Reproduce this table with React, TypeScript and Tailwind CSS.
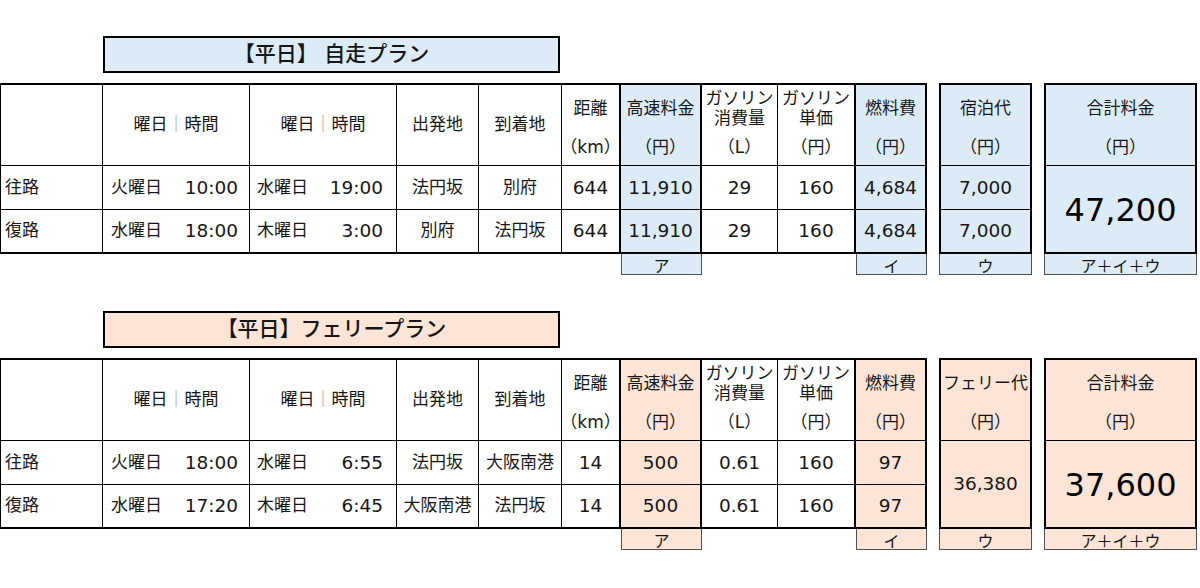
import React from "react";

type Row = {
  label: string;
  d1: string;
  t1: string;
  d2: string;
  t2: string;
  from: string;
  to: string;
  km: string;
  toll: string;
  gas: string;
  price: string;
  fuel: string;
};

type Plan = {
  title: string;
  fill: string;
  kTitle: string;
  kValues: string[] | null;
  kMerged: string | null;
  total: string;
  rows: Row[];
};

const plans: Plan[] = [
  {
    title: "【平日】 自走プラン",
    fill: "bg-[#ddebf7]",
    kTitle: "宿泊代",
    kValues: ["7,000", "7,000"],
    kMerged: null,
    total: "47,200",
    rows: [
      { label: "往路", d1: "火曜日", t1: "10:00", d2: "水曜日", t2: "19:00", from: "法円坂", to: "別府", km: "644", toll: "11,910", gas: "29", price: "160", fuel: "4,684" },
      { label: "復路", d1: "水曜日", t1: "18:00", d2: "木曜日", t2: "3:00", from: "別府", to: "法円坂", km: "644", toll: "11,910", gas: "29", price: "160", fuel: "4,684" },
    ],
  },
  {
    title: "【平日】フェリープラン",
    fill: "bg-[#fce4d6]",
    kTitle: "フェリー代",
    kValues: null,
    kMerged: "36,380",
    total: "37,600",
    rows: [
      { label: "往路", d1: "火曜日", t1: "18:00", d2: "水曜日", t2: "6:55", from: "法円坂", to: "大阪南港", km: "14", toll: "500", gas: "0.61", price: "160", fuel: "97" },
      { label: "復路", d1: "水曜日", t1: "17:20", d2: "木曜日", t2: "6:45", from: "大阪南港", to: "法円坂", km: "14", toll: "500", gas: "0.61", price: "160", fuel: "97" },
    ],
  },
];

const RB = ["border-r", "border-r", "border-r", "border-r", "border-r", "border-r-2", "border-r-2", "border-r", "border-r-2", "border-r-2"];
const BB = ["border-b", "border-b", "border-b-2"];

const Num = ({ children }: { children: React.ReactNode }) => (
  <span className="text-[18.5px]">{children}</span>
);

function TwoPart({ top, bottom }: { top: React.ReactNode; bottom: React.ReactNode }) {
  return (
    <div className="flex h-full flex-col">
      <div className="flex h-[46px] flex-col items-center justify-center leading-[20px]">{top}</div>
      <div className="flex flex-1 items-center justify-center">{bottom}</div>
    </div>
  );
}

const YoubiJikan = () => (
  <div className="flex h-full items-center justify-center">
    曜日<span className="text-[#9c9c9c]">｜</span>時間
  </div>
);

function Section({ plan }: { plan: Plan }) {
  const fillCol = (i: number) => (i === 6 || i === 9 ? plan.fill : "bg-white");
  const cell = (i: number, r: number) => `${RB[i]} ${BB[r]} border-black ${fillCol(i)}`;

  const header: React.ReactNode[] = [
    <div />,
    <YoubiJikan />,
    <YoubiJikan />,
    <div className="flex h-full items-center justify-center">出発地</div>,
    <div className="flex h-full items-center justify-center">到着地</div>,
    <TwoPart top={<span>距離</span>} bottom={<span>（km）</span>} />,
    <TwoPart top={<span>高速料金</span>} bottom={<span>（円）</span>} />,
    <TwoPart top={<><span>ガソリン</span><span>消費量</span></>} bottom={<span>（L）</span>} />,
    <TwoPart top={<><span>ガソリン</span><span>単価</span></>} bottom={<span>（円）</span>} />,
    <TwoPart top={<span>燃料費</span>} bottom={<span>（円）</span>} />,
  ];

  const rowCells = (row: Row): React.ReactNode[] => [
    <div className="flex h-full items-center pl-[4px]">{row.label}</div>,
    <div className="flex h-full items-center justify-between pl-[8px] pr-[11px]">
      <span>{row.d1}</span>
      <Num>{row.t1}</Num>
    </div>,
    <div className="flex h-full items-center justify-between pl-[7px] pr-[13px]">
      <span>{row.d2}</span>
      <Num>{row.t2}</Num>
    </div>,
    <div className="flex h-full items-center justify-center">{row.from}</div>,
    <div className="flex h-full items-center justify-center">{row.to}</div>,
    <div className="flex h-full items-center justify-center"><Num>{row.km}</Num></div>,
    <div className="flex h-full items-center justify-center"><Num>{row.toll}</Num></div>,
    <div className="flex h-full items-center justify-center"><Num>{row.gas}</Num></div>,
    <div className="flex h-full items-center justify-center"><Num>{row.price}</Num></div>,
    <div className="flex h-full items-center justify-center"><Num>{row.fuel}</Num></div>,
  ];

  const labelBox = `h-[21px] overflow-hidden border border-t-0 border-[#505050] ${plan.fill} flex items-center justify-center text-[16px] leading-none pt-[6px]`;

  return (
    <div className="flex flex-col pt-[36px]">
      <div
        className={`ml-[103px] flex h-[37px] w-[457px] items-center justify-center border-2 border-black ${plan.fill} text-[21px] font-medium`}
      >
        {plan.title}
      </div>
      <div className="mt-[10px] flex gap-[12px]">
        {/* main table */}
        <div className="flex w-[927px] flex-col">
          <div className="grid grid-cols-[102px_147px_147px_82px_83px_59px_81px_76px_78px_71px] grid-rows-[81px_44px_44px] border-t-2 border-l border-black">
            {header.map((h, i) => (
              <div key={`h${i}`} className={cell(i, 0)}>
                {h}
              </div>
            ))}
            {plan.rows.map((row, r) =>
              rowCells(row).map((c, i) => (
                <div key={`r${r}c${i}`} className={cell(i, r + 1)}>
                  {c}
                </div>
              ))
            )}
          </div>
          <div className="grid grid-cols-[102px_147px_147px_82px_83px_59px_81px_76px_78px_71px] pl-px">
            <div className="col-start-7">
              <div className={labelBox}>ア</div>
            </div>
            <div className="col-start-10">
              <div className={labelBox}>イ</div>
            </div>
          </div>
        </div>

        {/* K block */}
        <div className="flex w-[93px] flex-col">
          <div className={`flex h-[171px] flex-col border-2 border-black ${plan.fill}`}>
            <div className="h-[81px] border-b border-black">
              <TwoPart top={<span>{plan.kTitle}</span>} bottom={<span>（円）</span>} />
            </div>
            {plan.kValues ? (
              <>
                <div className="flex h-[44px] items-center justify-center border-b border-black">
                  <Num>{plan.kValues[0]}</Num>
                </div>
                <div className="flex flex-1 items-center justify-center">
                  <Num>{plan.kValues[1]}</Num>
                </div>
              </>
            ) : (
              <div className="flex flex-1 items-center justify-center">
                <Num>{plan.kMerged}</Num>
              </div>
            )}
          </div>
          <div className={labelBox}>ウ</div>
        </div>

        {/* L block */}
        <div className="flex w-[153px] flex-col">
          <div className={`flex h-[171px] flex-col border-2 border-black ${plan.fill}`}>
            <div className="h-[81px] border-b border-black">
              <TwoPart top={<span>合計料金</span>} bottom={<span>（円）</span>} />
            </div>
            <div className="flex flex-1 items-center justify-center pt-[2px]">
              <span className="text-[32px] text-black">{plan.total}</span>
            </div>
          </div>
          <div className={labelBox}>ア＋イ＋ウ</div>
        </div>
      </div>
    </div>
  );
}

export default function App() {
  return (
    <div
      className="h-[588px] w-[1200px] overflow-hidden bg-white text-[17px] text-[#161616]"
      style={{ fontFamily: '"DejaVu Sans", "Noto Sans CJK JP", sans-serif' }}
    >
      {plans.map((p, i) => (
        <Section key={i} plan={p} />
      ))}
    </div>
  );
}
